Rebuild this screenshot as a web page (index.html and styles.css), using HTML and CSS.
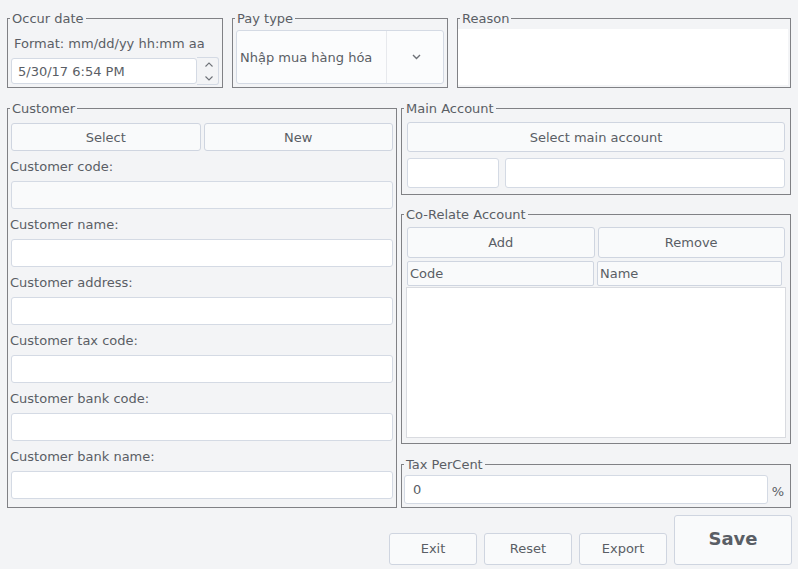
FILE: index.html
```html
<!DOCTYPE html>
<html>
<head>
<meta charset="utf-8">
<title>Payment</title>
<link rel="stylesheet" href="styles.css">
</head>
<body>
<div class="page">
  <div class="top-row">
    <fieldset class="group g-occur">
      <legend>Occur date</legend>
      <div class="occur-body">
        <div class="hint">Format: mm/dd/yy hh:mm aa</div>
        <div class="spin">
          <input class="spin-input" type="text" value="5/30/17 6:54 PM">
          <div class="spin-btns">
            <svg class="arrow" width="8" height="5" viewBox="0 0 8 5"><path d="M0.5 4.5 L4 1 L7.5 4.5" fill="none" stroke="#6d7177" stroke-width="1.1"/></svg>
            <svg class="arrow" width="8" height="5" viewBox="0 0 8 5"><path d="M0.5 0.5 L4 4 L7.5 0.5" fill="none" stroke="#6d7177" stroke-width="1.1"/></svg>
          </div>
        </div>
      </div>
    </fieldset>
    <fieldset class="group g-pay">
      <legend>Pay type</legend>
      <div class="pay-body">
        <div class="combo">
          <div class="combo-text">Nhập mua hàng hóa</div>
          <div class="combo-btn">
            <svg width="9" height="6" viewBox="0 0 9 6"><path d="M1 1 L4.5 4.5 L8 1" fill="none" stroke="#6d7177" stroke-width="1.4"/></svg>
          </div>
        </div>
      </div>
    </fieldset>
    <fieldset class="group g-reason">
      <legend>Reason</legend>
      <div class="reason-body">
        <div class="textarea"></div>
      </div>
    </fieldset>
  </div>

  <div class="mid-row">
    <fieldset class="group g-customer">
      <legend>Customer</legend>
      <div class="customer-body">
        <div class="btn-row">
          <button class="btn btn-cust">Select</button>
          <button class="btn btn-cust">New</button>
        </div>
        <div class="field-label">Customer code:</div>
        <input class="input input-ro" type="text" readonly>
        <div class="field-label">Customer name:</div>
        <input class="input" type="text">
        <div class="field-label">Customer address:</div>
        <input class="input" type="text">
        <div class="field-label">Customer tax code:</div>
        <input class="input" type="text">
        <div class="field-label">Customer bank code:</div>
        <input class="input" type="text">
        <div class="field-label">Customer bank name:</div>
        <input class="input" type="text">
      </div>
    </fieldset>

    <div class="right-col">
      <fieldset class="group g-main">
        <legend>Main Account</legend>
        <div class="main-body">
          <button class="btn btn-main">Select main account</button>
          <div class="main-inputs">
            <input class="input in-small" type="text">
            <input class="input in-large" type="text">
          </div>
        </div>
      </fieldset>

      <fieldset class="group g-corelate">
        <legend>Co-Relate Account</legend>
        <div class="corelate-body">
          <div class="btn-row">
            <button class="btn btn-cr">Add</button>
            <button class="btn btn-cr">Remove</button>
          </div>
          <div class="thead">
            <div class="th th-code">Code</div>
            <div class="th th-name">Name</div>
          </div>
          <div class="tbody"></div>
        </div>
      </fieldset>

      <fieldset class="group g-tax">
        <legend>Tax PerCent</legend>
        <div class="tax-body">
          <input class="input tax-input" type="text" value="0">
          <div class="pct">%</div>
        </div>
      </fieldset>
    </div>
  </div>

  <div class="bottom-row">
    <button class="btn btn-sm">Exit</button>
    <button class="btn btn-sm">Reset</button>
    <button class="btn btn-sm">Export</button>
    <button class="btn btn-save">Save</button>
  </div>
</div>
</body>
</html>
```

FILE: styles.css
```css
html, body {
  margin: 0;
  padding: 0;
}

body {
  background: #f3f4f6;
  font-family: "DejaVu Sans", "Liberation Sans", sans-serif;
  font-size: 13px;
  color: #5a5e65;
}

.page {
  width: 798px;
  height: 569px;
  box-sizing: border-box;
  padding: 11px 7px 0 7px;
}

/* group boxes */
.group {
  margin: 0;
  padding: 0;
  border: 1px solid #808185;
  min-width: 0;
  box-sizing: border-box;
}

.group legend {
  margin-left: 2px;
  padding: 0 2px;
  font-size: 13px;
  line-height: 15px;
  color: #5a5e65;
}

/* common controls */
.btn {
  box-sizing: border-box;
  margin: 0;
  padding: 0;
  font-family: inherit;
  font-size: 13px;
  color: #5a5e65;
  background: #f9fafb;
  border: 1px solid #cfd5e0;
  border-radius: 3px;
  text-align: center;
}

.input {
  display: block;
  box-sizing: border-box;
  margin: 0;
  width: 100%;
  height: 28px;
  padding: 0 0 0 6px;
  font-family: inherit;
  font-size: 13px;
  color: #5a5e65;
  background: #ffffff;
  border: 1px solid #d4dae4;
  border-radius: 3px;
  outline: none;
}

.input-ro {
  background: #f9fafb;
}

/* top row */
.top-row {
  display: flex;
  gap: 9px;
}

.g-occur { width: 216px; }
.g-pay { width: 216px; }
.g-reason { width: 334px; }

.occur-body {
  padding: 10px 3px 2px 3px;
}

.hint {
  padding-left: 3px;
  line-height: 15px;
  margin-bottom: 6px;
}

.spin {
  display: flex;
  height: 28px;
}

.spin-input {
  flex: 1;
  min-width: 0;
  box-sizing: border-box;
  margin: 1px 0;
  height: 26px;
  padding: 0 0 0 6px;
  font-family: inherit;
  font-size: 13px;
  color: #5a5e65;
  background: #ffffff;
  border: 1px solid #d4dae4;
  border-radius: 3px;
  outline: none;
}

.spin-btns {
  width: 22px;
  box-sizing: border-box;
  border: 1px solid #d4dae4;
  border-left: 0;
  border-radius: 0 3px 3px 0;
  display: flex;
  flex-direction: column;
  align-items: center;
  justify-content: center;
  gap: 9px;
  padding-left: 2px;
}

.arrow {
  display: block;
}

.pay-body {
  padding: 4px 3px 3px 3px;
}

.combo {
  display: flex;
  height: 54px;
  box-sizing: border-box;
  border: 1px solid #d4dae4;
  border-radius: 3px;
  background: #fbfcfd;
}

.combo-text {
  flex: 1;
  display: flex;
  align-items: center;
  padding-left: 3px;
}

.combo-btn {
  width: 54px;
  border-left: 1px solid #e7e9ed;
  display: flex;
  align-items: center;
  justify-content: center;
  padding-left: 2px;
}

.reason-body {
  padding: 3px 2px 2px 0;
}

.textarea {
  height: 56px;
  background: #ffffff;
}

/* middle */
.mid-row {
  display: flex;
  gap: 4px;
  margin-top: 13px;
}

.g-customer {
  width: 390px;
}

.customer-body {
  padding: 7px 3px 7px 3px;
}

.btn-row {
  display: flex;
  gap: 3px;
}

.btn-cust {
  flex: 1;
  height: 28px;
}

.field-label {
  box-sizing: border-box;
  height: 30px;
  padding-top: 1px;
  line-height: 30px;
  margin-left: -1px;
}

.right-col {
  width: 390px;
  display: flex;
  flex-direction: column;
}

.main-body {
  padding: 6px 5px 6px 5px;
}

.btn-main {
  display: block;
  width: 100%;
  height: 30px;
}

.main-inputs {
  display: flex;
  gap: 6px;
  margin-top: 6px;
}

.in-small {
  width: 92px;
  height: 30px;
}

.in-large {
  flex: 1;
  height: 30px;
}

.g-corelate {
  margin-top: 12px;
}

.corelate-body {
  padding: 5px 5px 5px 5px;
}

.btn-cr {
  flex: 1;
  height: 31px;
}

.thead {
  display: flex;
  gap: 3px;
  height: 25px;
  margin-top: 3px;
}

.th {
  box-sizing: border-box;
  height: 25px;
  line-height: 23px;
  padding-left: 2px;
  background: #f9fafb;
  border: 1px solid #cfd5e0;
  border-radius: 2px;
}

.th-code {
  width: 187px;
}

.th-name {
  flex: 1;
  margin-right: 3px;
}

.tbody {
  height: 151px;
  box-sizing: border-box;
  margin: 1px -1px 0 -1px;
  background: #ffffff;
  border: 1px solid #d9dbe0;
}

.g-tax {
  margin-top: 13px;
}

.tax-body {
  display: flex;
  padding: 3px 2px 3px 2px;
}

.tax-input {
  flex: 1;
  width: auto;
  height: 29px;
  padding-left: 8px;
}

.pct {
  width: 20px;
  text-align: center;
  padding-top: 9px;
  line-height: 15px;
}

/* bottom */
.bottom-row {
  display: flex;
  justify-content: flex-end;
  align-items: flex-end;
  gap: 7px;
  margin-top: 7px;
  margin-right: -1px;
}

.btn-sm {
  width: 88px;
  height: 32px;
  padding-bottom: 1px;
}

.btn-save {
  width: 118px;
  height: 50px;
  padding-bottom: 3px;
  font-size: 18px;
  font-weight: bold;
  color: #5a5e65;
}
```
